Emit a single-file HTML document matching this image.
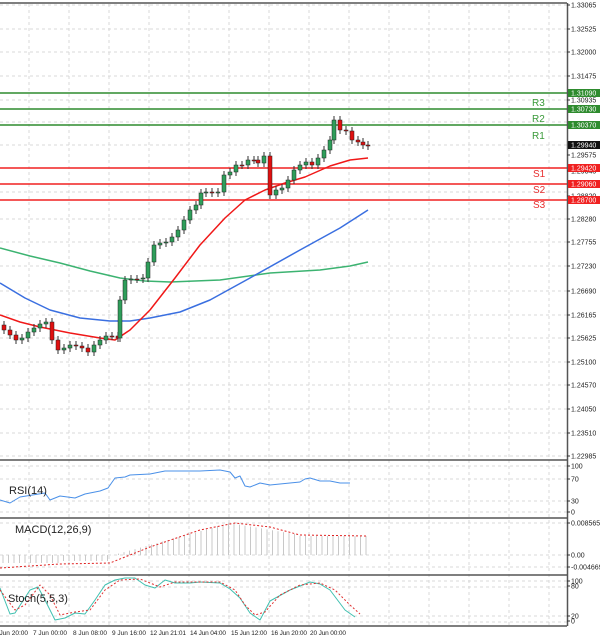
<!DOCTYPE html>
<html><head><meta charset="utf-8"><style>
html,body{margin:0;padding:0;background:#fff;width:600px;height:641px;overflow:hidden}
svg{display:block}
text{font-family:"Liberation Sans",sans-serif}
</style></head><body>
<svg id="s" width="600" height="641" viewBox="0 0 600 641" xmlns="http://www.w3.org/2000/svg">
<g id="grid" stroke="#d8d8d8" stroke-dasharray="3,3" stroke-width="1"></g>
<g id="main"></g>
<g fill="none" stroke="#555" stroke-width="1.5">
<line x1="0" y1="3" x2="567" y2="3"/>
<line x1="567.5" y1="3" x2="567.5" y2="626"/>
<line x1="0" y1="460" x2="567" y2="460"/>
<line x1="0" y1="518" x2="567" y2="518"/>
<line x1="0" y1="575" x2="567" y2="575"/>
<line x1="0" y1="626" x2="567" y2="626"/>
</g>
<g id="axis" font-size="7" fill="#222"></g>
<g font-size="11" fill="#222">
<text x="9" y="494">RSI(14)</text>
<text x="15" y="533">MACD(12,26,9)</text>
<text x="8" y="602">Stoch(5,5,3)</text>
</g>
<g font-size="10">
<text x="532" y="106" fill="#3a9a3a">R3</text>
<text x="532" y="122" fill="#3a9a3a">R2</text>
<text x="532" y="139" fill="#3a9a3a">R1</text>
<text x="533" y="177" fill="#e83030">S1</text>
<text x="533" y="193" fill="#e83030">S2</text>
<text x="533" y="208" fill="#e83030">S3</text>
</g>
<g font-size="6.5" fill="#222">
<text x="-6" y="635" textLength="34">6 Jun 20:00</text>
<text x="33" y="635" textLength="34">7 Jun 00:00</text>
<text x="73" y="635" textLength="34">8 Jun 08:00</text>
<text x="112" y="635" textLength="34">9 Jun 16:00</text>
<text x="150" y="635" textLength="36">12 Jun 21:01</text>
<text x="190" y="635" textLength="36">14 Jun 04:00</text>
<text x="231" y="635" textLength="36">15 Jun 12:00</text>
<text x="271" y="635" textLength="36">16 Jun 20:00</text>
<text x="310" y="635" textLength="36">20 Jun 00:00</text>
</g>
</svg>
<script>
var NS="http://www.w3.org/2000/svg";
function el(p,t,a,txt){var e=document.createElementNS(NS,t);for(var k in a)e.setAttribute(k,a[k]);if(txt!=null)e.textContent=txt;p.appendChild(e);return e;}
var G=document.getElementById('grid');
for(var x=29;x<567;x+=40){el(G,'line',{x1:x,y1:4,x2:x,y2:626});}
var hy=[5,29,52,76,100,122,145,168,192,219,242,266,291,315,338,362,385,409,433,456,466,479,501,512,523,555,567,581,587,616,622];
hy.forEach(function(y){el(G,'line',{x1:0,y1:y,x2:567,y2:y});});
var A=document.getElementById('axis');
var lab=[[5,"1.33065"],[29,"1.32525"],[52,"1.32000"],[76,"1.31475"],[100,"1.30935"],[155,"1.29575"],[171,"1.29345"],[196,"1.28820"],[219,"1.28280"],[242,"1.27755"],[266,"1.27230"],[291,"1.26690"],[315,"1.26165"],[338,"1.25625"],[362,"1.25100"],[385,"1.24570"],[409,"1.24050"],[433,"1.23510"],[456,"1.22985"],
[466,"100"],[479,"70"],[501,"30"],[512,"0"],[523,"0.008565"],[555,"0.00"],[567,"-0.004669"],[581,"100"],[586,"80"],[616,"20"],[621,"0"]];
lab.forEach(function(l){el(A,'line',{x1:567,y1:l[0],x2:570,y2:l[0],stroke:'#333'});el(A,'text',{x:571,y:l[0]+2.5},l[1]);});
var M=document.getElementById('main');
[[93,'#2e8b2e','1.31090'],[109,'#2e8b2e','1.30730'],[125,'#2e8b2e','1.30370'],[168,'#f02020','1.29420'],[184,'#f02020','1.29060'],[200,'#f02020','1.28700']].forEach(function(l){
el(M,'line',{x1:0,y1:l[0],x2:567,y2:l[0],stroke:l[1],'stroke-width':1.5});
el(A,'rect',{x:568,y:l[0]-4,width:32,height:8,fill:l[1]});
el(A,'text',{x:571,y:l[0]+2.5,fill:'#fff'},l[2]);});
el(A,'rect',{x:568,y:141,width:32,height:8,fill:'#111'});el(A,'text',{x:571,y:147.5,fill:'#fff'},'1.29940');
function pl(pts,c,w,d){el(M,'polyline',{points:pts.map(function(p){return p.join(',')}).join(' '),fill:'none',stroke:c,'stroke-width':w||1.3,'stroke-dasharray':d||'none','stroke-linejoin':'round'});}
pl([[0,248],[30,256],[60,263],[90,271],[120,278],[145,281],[170,282],[220,280],[270,273],[320,270],[350,266],[368,262]],'#3cb371',1.5);
pl([[0,283],[25,298],[50,310],[80,318],[110,321],[130,321],[150,318],[180,312],[210,300],[250,278],[300,250],[340,228],[368,210]],'#3a6fe0',1.5);
pl([[0,315],[20,322],[40,327],[70,333],[100,338],[115,340],[130,330],[150,310],[175,278],[200,245],[225,218],[245,200],[265,190],[285,183],[305,177],[330,166],[350,160],[368,158]],'#f01818',1.5);
var cl=[[4,330],[10,335],[16,340],[22,338],[28,332],[34,328],[40,324],[46,322],[52,340],[58,350],[64,348],[70,345],[76,346],[82,348],[88,352],[94,345],[100,340],[106,336],[112,336],[118,338],[120,300],[125,280],[131,279],[137,279],[143,278],[148,262],[154,245],[160,243],[166,242],[172,237],[178,230],[184,220],[190,210],[196,205],[201,193],[206,192],[212,193],[218,192],[224,175],[230,172],[236,165],[242,165],[248,160],[254,160],[258,163],[264,156],[270,195],[276,190],[282,188],[288,180],[294,170],[300,165],[306,162],[312,165],[318,158],[324,150],[330,140],[334,120],[340,130],[346,131],[352,140],[358,142],[363,145],[368,146]];
var prev=330;
cl.forEach(function(c,i){var o=prev,cc=c[1];if(i==0)o=325;var top=Math.min(o,cc),bot=Math.max(o,cc);var up=cc<o;
el(M,'line',{x1:c[0],y1:top-4,x2:c[0],y2:bot+4,stroke:'#333','stroke-width':1});
el(M,'rect',{x:c[0]-2,y:top,width:4,height:Math.max(1,bot-top),fill:up?'#2e9e5a':'#e01010',stroke:'#222','stroke-width':0.5});
prev=cc;});
pl([[0,500],[10,503],[20,497],[45,493],[50,500],[60,496],[75,498],[85,494],[100,491],[108,488],[115,478],[125,477],[130,475],[150,474],[165,471],[200,471],[220,470],[230,472],[235,478],[240,476],[245,486],[250,487],[260,483],[270,485],[280,484],[290,483],[300,482],[305,479],[310,478],[320,481],[330,481],[340,483],[350,483]],'#4a90e8',1);
for(var x=3;x<=368;x+=5.5){var t;if(x<110)t=556+(x<60?7:5);else if(x<230)t=556-(x-110)/120*33;else if(x<300)t=523+(x-230)/70*12;else t=536;
el(M,'line',{x1:x,y1:Math.min(t,555),x2:x,y2:Math.max(t,555),stroke:'#c8c8c8','stroke-width':1});}
pl([[0,568],[60,564],[110,563],[150,547],[200,530],[235,523],[270,527],[300,535],[368,536]],'#e02020',1,'2,2');
pl([[0,588],[10,614],[15,613],[30,590],[38,587],[45,600],[55,620],[65,618],[75,613],[85,614],[95,600],[105,585],[115,580],[125,578],[135,578],[145,585],[155,588],[165,580],[175,583],[190,583],[200,582],[220,583],[230,589],[240,598],[250,613],[260,620],[270,601],[290,590],[310,582],[320,584],[330,590],[345,610],[355,617]],'#40c0b0',1);
pl([[0,590],[15,610],[25,605],[40,585],[50,595],[60,615],[75,612],[90,610],[105,590],[120,580],[140,579],[150,583],[160,587],[175,582],[200,582],[220,582],[235,590],[245,605],[255,615],[265,612],[280,595],[300,585],[320,583],[335,590],[350,605],[360,614]],'#e03030',1,'2,2');
</script>
</body></html>
